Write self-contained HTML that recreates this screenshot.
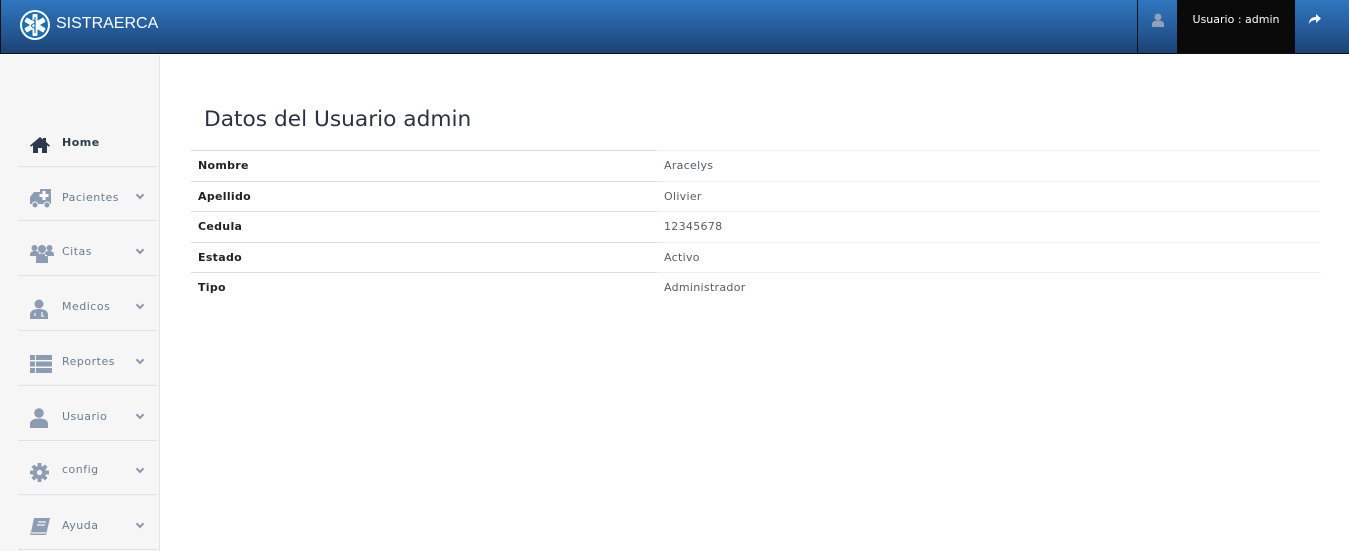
<!DOCTYPE html>
<html><head><meta charset="utf-8"><style>
*{margin:0;padding:0;box-sizing:border-box}
body{width:1349px;height:551px;overflow:hidden;background:#fff;font-family:"DejaVu Sans","Liberation Sans",sans-serif;position:relative}
.hdr{position:absolute;left:0;top:0;width:1349px;height:54px;background:linear-gradient(#3077c0,#1c4377);border-bottom:1px solid #111;border-left:1px solid #111}
.brand{position:absolute;left:55px;top:15px;color:#fff;font-family:"Liberation Sans",sans-serif;font-size:16px;letter-spacing:0}
.usr{position:absolute;left:1176px;top:0;width:118px;height:53px;background:#0a0a0a;color:#fff;font-size:11px;text-align:center;line-height:40px}
.sepv{position:absolute;left:1136px;top:0;width:1px;height:53px;background:#111}
.side{position:absolute;left:0;top:55px;width:160px;height:496px;background:#f6f6f6;border-right:1px solid #e2e4e8}
.it{position:absolute;left:18px;width:139px;height:55px;border-bottom:1px solid #dde2ea}
.it span{position:absolute;left:44px;font-size:11px;color:#6a7b94;letter-spacing:0.5px}
.it svg.ic{position:absolute;left:12px}
.chev{position:absolute;left:119px;width:6px;height:6px;border-right:2px solid #8a97aa;border-bottom:2px solid #8a97aa;transform:rotate(45deg)}
h1{position:absolute;left:204px;top:107px;font-weight:normal;font-size:21.7px;color:#2c3340}
.row{position:absolute;left:191px;width:1129px;height:31px;font-size:11px;letter-spacing:0.3px}
.row .l{position:absolute;left:0;top:0;width:466px;height:100%;border-top:1px solid #dcdcdc;font-weight:bold;color:#222;padding:8px 0 0 7px}
.row .r{position:absolute;left:466px;top:0;width:663px;height:100%;border-top:1px solid #edf0f4;color:#555d6b;padding:8px 0 0 7px}
</style></head><body>
<div class="hdr">
<svg style="position:absolute;left:18px;top:9px" width="32" height="32" viewBox="0 0 32 32"><circle cx="16" cy="16" r="15" fill="#fff"/><circle cx="16" cy="16" r="13" fill="#1d6fae"/><g fill="#fff"><rect x="13.5" y="5" width="5" height="22" rx="1"/><rect x="13.5" y="5" width="5" height="22" rx="1" transform="rotate(60 16 16)"/><rect x="13.5" y="5" width="5" height="22" rx="1" transform="rotate(-60 16 16)"/></g><path d="M16 8v16" stroke="#1d6fae" stroke-width="1.2"/><path d="M14 11c3 1 3 3 0 4s-1 4 2 4" stroke="#1d6fae" fill="none" stroke-width="1"/></svg>
<div class="brand">SISTRAERCA</div>
<div class="sepv"></div>
<svg style="position:absolute;left:1151px;top:13px" width="12" height="14" viewBox="0 0 12 14"><circle cx="6" cy="4" r="3.5" fill="#8fa0b8"/><path d="M0 14v-3c0-2 2-3.5 6-3.5s6 1.5 6 3.5v3z" fill="#8fa0b8"/></svg>
<div class="usr">Usuario : admin</div>
<svg style="position:absolute;left:1308px;top:14px" width="12" height="10" viewBox="0 0 12 10"><path d="M0 10C0 5 3 3 7 3V0l5 4.5L7 9V6C4 6 1.5 7 0 10z" fill="#fff"/></svg>
</div>
<div class="side">
<div class="it" style="top:57px"><svg class="ic" style="top:25px" width="20" height="16" viewBox="0 0 20 16"><path d="M10 0L0 8.5l1.2 1.3L3 8.3V16h5v-5h4v5h5V8.3l1.8 1.5L20 8.5 16 5V1h-3v1.5z" fill="#2d3a4c"/></svg><span style="top:24px;font-weight:bold;color:#2d3a4c">Home</span></div>
<div class="it" style="top:111px"><svg class="ic" style="top:23px" width="24" height="19" viewBox="0 0 24 19"><path d="M0 8l4-5h6V0h11v15H0z" fill="#8d9cb2"/><circle cx="5" cy="16" r="3" fill="#8d9cb2" stroke="#f6f6f6"/><circle cx="17" cy="16" r="3" fill="#8d9cb2" stroke="#f6f6f6"/><path d="M14 2v9M9.5 6.5h9" stroke="#fff" stroke-width="3"/></svg><span style="top:25px">Pacientes</span><div class="chev" style="top:26px"></div></div>
<div class="it" style="top:166px"><svg class="ic" style="top:23px" width="24" height="19" viewBox="0 0 24 19"><circle cx="4.5" cy="4" r="3" fill="#8d9cb2"/><circle cx="19.5" cy="4" r="3" fill="#8d9cb2"/><circle cx="12" cy="5" r="4" fill="#8d9cb2"/><path d="M0 11c0-3 2-4 5-4s4 1 4 2v3H0zM24 11c0-3-2-4-5-4s-4 1-4 2v3h9zM6 19v-5c0-3 3-4.5 6-4.5s6 1.5 6 4.5v5z" fill="#8d9cb2"/></svg><span style="top:24px">Citas</span><div class="chev" style="top:26px"></div></div>
<div class="it" style="top:221px"><svg class="ic" style="top:23px" width="18" height="20" viewBox="0 0 18 20"><circle cx="9" cy="5" r="4.5" fill="#8d9cb2"/><path d="M0 20v-4c0-4 3-6 9-6s9 2 9 6v4z" fill="#8d9cb2"/><path d="M5 14v3M12 13v3M11 17h3" stroke="#f6f6f6" stroke-width="1.2" fill="none"/></svg><span style="top:24px">Medicos</span><div class="chev" style="top:26px"></div></div>
<div class="it" style="top:276px"><svg class="ic" style="top:24px" width="22" height="18" viewBox="0 0 22 18"><g fill="#8d9cb2"><rect x="0" y="0" width="5" height="5"/><rect x="6" y="0" width="16" height="5"/><rect x="0" y="6.5" width="5" height="5"/><rect x="6" y="6.5" width="16" height="5"/><rect x="0" y="13" width="5" height="5"/><rect x="6" y="13" width="16" height="5"/></g></svg><span style="top:24px">Reportes</span><div class="chev" style="top:26px"></div></div>
<div class="it" style="top:331px"><svg class="ic" style="top:22px" width="18" height="20" viewBox="0 0 18 20"><circle cx="9" cy="5" r="4.8" fill="#8d9cb2"/><path d="M0 20v-4c0-3.5 3-5.5 9-5.5s9 2 9 5.5v4z" fill="#8d9cb2"/></svg><span style="top:24px">Usuario</span><div class="chev" style="top:26px"></div></div>
<div class="it" style="top:385px"><svg class="ic" style="top:23px" width="19" height="19" viewBox="0 0 20 20"><g fill="#8d9cb2"><circle cx="10" cy="10" r="7"/><rect x="8" y="0" width="4" height="20"/><rect x="8" y="0" width="4" height="20" transform="rotate(45 10 10)"/><rect x="8" y="0" width="4" height="20" transform="rotate(90 10 10)"/><rect x="8" y="0" width="4" height="20" transform="rotate(135 10 10)"/></g><circle cx="10" cy="10" r="2.8" fill="#f6f6f6"/></svg><span style="top:23px">config</span><div class="chev" style="top:26px"></div></div>
<div class="it" style="top:440px"><svg class="ic" style="top:23px" width="20" height="19" viewBox="0 0 20 19"><path d="M4 0h16l-4 17H1C0 17 0 15 1 14z" fill="#8d9cb2"/><path d="M1 15h15" stroke="#f6f6f6" stroke-width="1.2"/><path d="M8 4h8M7 7h8" stroke="#f6f6f6" stroke-width="1.2"/></svg><span style="top:24px">Ayuda</span><div class="chev" style="top:26px"></div></div>
</div>
<h1>Datos del Usuario admin</h1>
<div class="row" style="top:150px"><div class="l">Nombre</div><div class="r">Aracelys</div></div>
<div class="row" style="top:181px"><div class="l">Apellido</div><div class="r">Olivier</div></div>
<div class="row" style="top:211px"><div class="l">Cedula</div><div class="r">12345678</div></div>
<div class="row" style="top:242px"><div class="l">Estado</div><div class="r">Activo</div></div>
<div class="row" style="top:272px"><div class="l">Tipo</div><div class="r">Administrador</div></div>
</body></html>
